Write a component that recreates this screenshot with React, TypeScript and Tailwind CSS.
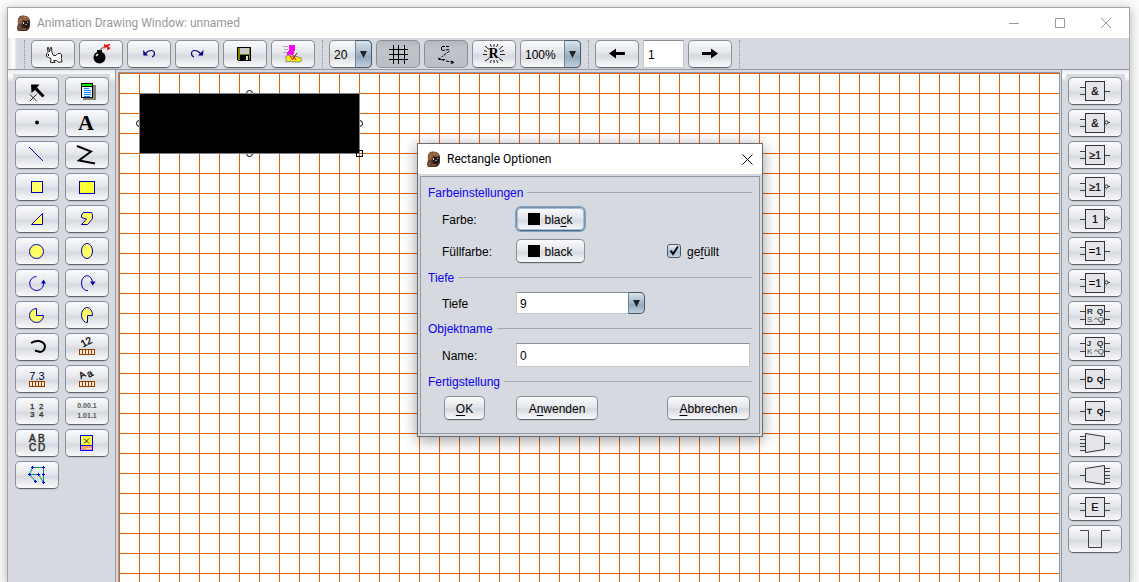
import React from "react";

const face =
  "rounded-[5px] border border-[#8b8e96] border-b-[#5f6269] bg-[linear-gradient(#fafbfc_0%,#e6e8ec_42%,#d6d9df_58%,#e4e6ea_72%,#f8f9fb_100%)] shadow-[0_1px_0_#c3c6cd]";
const arrowFace =
  "pointer-events-none absolute inset-y-0 right-0 flex items-center justify-center rounded-r-[5px] border border-[#46596c] border-l-[#6d8399] bg-[linear-gradient(#d8e3ec_0%,#a9bccd_45%,#93a9bd_60%,#bfd0de_100%)]";
const BLUE = "#0000bb";

function Icon({ children, crisp = false }: { children: React.ReactNode; crisp?: boolean }) {
  return (
    <svg
      width="30"
      height="24"
      viewBox="0 0 30 24"
      fill="none"
      shapeRendering={crisp ? "crispEdges" : "auto"}
      aria-hidden="true"
      className="block shrink-0 overflow-visible font-['Liberation_Sans',sans-serif]"
    >
      {children}
    </svg>
  );
}

function ToolButton({
  label,
  children,
  wide = false,
  pressed = false,
}: {
  label: string;
  children: React.ReactNode;
  wide?: boolean;
  pressed?: boolean;
}) {
  return (
    <button
      type="button"
      aria-label={label}
      className={`flex h-7 shrink-0 items-center justify-center ${wide ? "w-[54px]" : "w-11"} ${
        pressed
          ? "rounded-[5px] border border-[#8b8e96] bg-[linear-gradient(#b4b7bf,#c0c3ca_30%,#bcbfc6)] shadow-[0_1px_0_#e6e8ec]"
          : face
      }`}
    >
      {children}
    </button>
  );
}

function Poodle() {
  return (
    <svg width="14" height="16" viewBox="0 0 14 16" aria-hidden="true" className="block shrink-0">
      <path d="M3 1Q6 0 9 1Q12 2 13 5L13 12Q12 15 9 16L1 16L0 13L1 9L1 4Z" fill="#4a3024" />
      <path d="M2 3Q4 0 8 1Q12 1 12 5L10 6L6 5L5 8L3 10L1 9Q0 5 2 3Z" fill="#8f6040" />
      <path d="M1 10L4 9L5 15L1 16Z" fill="#6e4530" />
      <path d="M6 6L12 6L12 11L10 14L6 12Z" fill="#241a1a" />
      <path d="M3 4H5V5H3ZM7 2H9V3H7ZM2 12H3V13H2Z" fill="#ab7a52" />
      <rect x="6" y="7" width="1" height="2" fill="#d8d0cc" />
      <rect x="10" y="7" width="1" height="1" fill="#b9b0ad" />
      <path d="M8 9H10V10H8Z" fill="#8a8796" />
      <path d="M5 13H9V15H5Z" fill="#7d4a30" />
    </svg>
  );
}

function Ruler() {
  return (
    <path
      d="M7.5 14.5H22.5V19.5H7.5ZM10.5 14.5V19.5M13.5 14.5V19.5M16.5 14.5V19.5M19.5 14.5V19.5"
      stroke="#8f3d00"
      fill="#fbe9d8"
      shapeRendering="crispEdges"
    />
  );
}

const palette: { label: string; icon: React.ReactNode }[] = [
  {
    label: "Select",
    icon: (
      <Icon>
        <path d="M9 5.5H17.5L15 8.5L22.5 16.5L20.5 18.5L13 11L9.5 14Z" fill="#000" />
        <path d="M8 15.5L14.5 22M14.5 15.5L8 22" stroke="#222" />
      </Icon>
    ),
  },
  {
    label: "Properties",
    icon: (
      <Icon crisp>
        <rect x="11" y="6" width="13" height="15" fill="#808080" />
        <rect x="9.5" y="4.5" width="11" height="14" fill="#e4f2ff" stroke="#000" />
        <rect x="10" y="5" width="10" height="2" fill="#00f000" />
        <path d="M9.5 7.5H20.5" stroke="#000" />
        <path d="M12 9.5H17M12 11.5H19M12 13.5H19M12 15.5H19M12 17.5H18" stroke="#1683ff" />
      </Icon>
    ),
  },
  { label: "Point", icon: <Icon><circle cx="15" cy="11.5" r="2" fill="#000" /></Icon> },
  {
    label: "Text",
    icon: <span className="pr-[2px] font-['Liberation_Serif',serif] text-[22px] leading-[26px] font-bold">A</span>,
  },
  { label: "Line", icon: <Icon><path d="M7 4L21 18" stroke={BLUE} /></Icon> },
  { label: "Polyline", icon: <Icon><path d="M5 3L19 8.5L7 17.5L23 20.5" stroke="#000" strokeWidth="2" /></Icon> },
  { label: "Square", icon: <Icon crisp><rect x="9.5" y="6.5" width="11" height="11" fill="#ffff66" stroke={BLUE} /></Icon> },
  { label: "Rectangle", icon: <Icon crisp><rect x="7.5" y="6.5" width="15" height="12" fill="#ffff33" stroke={BLUE} /></Icon> },
  { label: "Triangle", icon: <Icon><path d="M20.5 6.5V17.5H9.5Z" fill="#ffff66" stroke={BLUE} /></Icon> },
  { label: "Polygon", icon: <Icon><path d="M11.5 5.5H19.5L20.5 7.5V11.5L15.5 17.5H9.5L14.5 12L9.5 10.5L9.5 8Z" fill="#ffff66" stroke={BLUE} /></Icon> },
  { label: "Circle", icon: <Icon><circle cx="14.5" cy="12.5" r="7" fill="#ffff66" stroke={BLUE} /></Icon> },
  { label: "Ellipse", icon: <Icon><ellipse cx="15" cy="12" rx="5.5" ry="7.5" fill="#ffff66" stroke={BLUE} /></Icon> },
  {
    label: "Open arc",
    icon: (
      <Icon>
        <path d="M14.5 5.5A7 7 0 1 0 21.5 11" stroke={BLUE} />
        <path d="M19 12.5L21.5 8.5L24 12.5Z" fill={BLUE} />
      </Icon>
    ),
  },
  {
    label: "Elliptic arc",
    icon: (
      <Icon>
        <path d="M16 19.5A5.5 7.5 0 1 1 20.5 12" stroke={BLUE} />
        <path d="M18 10.5H23.5L20.8 14.5Z" fill={BLUE} />
      </Icon>
    ),
  },
  { label: "Circle segment", icon: <Icon><path d="M14.5 12.5V5.5A7 7 0 1 0 21.5 12.5Z" fill="#ffff66" stroke={BLUE} /></Icon> },
  { label: "Ellipse segment", icon: <Icon><path d="M15.5 12.5H20.5A5.5 7.5 0 1 0 15.5 19.5Z" fill="#ffff66" stroke={BLUE} /></Icon> },
  { label: "Arc", icon: <Icon><path d="M9 8Q13 5.5 17 6Q23 7.5 23 11.5Q22.5 16.5 18 17L13 15.5" stroke="#000" strokeWidth="2" /></Icon> },
  {
    label: "Integer array",
    icon: (
      <Icon>
        <text x="11" y="12.5" fontSize="10" fill="#000" stroke="#000" strokeWidth="0.3" transform="rotate(-28 11 12.5)">12</text>
        <Ruler />
      </Icon>
    ),
  },
  {
    label: "Double array",
    icon: (
      <Icon>
        <text x="15" y="13" fontSize="11" textAnchor="middle" fill="#000044">7.3</text>
        <Ruler />
      </Icon>
    ),
  },
  {
    label: "String array",
    icon: (
      <Icon>
        <g fill="#000" stroke="#000" strokeWidth="0.3">
          <text x="9" y="12" fontSize="9" transform="rotate(-30 9 12)">A</text>
          <text x="17" y="11" fontSize="10" transform="rotate(-30 17 11)">a</text>
        </g>
        <Ruler />
      </Icon>
    ),
  },
  {
    label: "Integer matrix",
    icon: (
      <Icon>
        <g fontSize="8" fill="#333" stroke="#333" strokeWidth="0.3">
          <text x="8" y="10">1</text>
          <text x="17" y="10">2</text>
          <text x="8" y="18">3</text>
          <text x="17" y="18">4</text>
        </g>
      </Icon>
    ),
  },
  {
    label: "Double matrix",
    icon: (
      <Icon>
        <g fontSize="7" fontWeight="700" fill="#555" textAnchor="middle">
          <text x="15" y="9">0.00.1</text>
          <text x="15" y="19">1.01.1</text>
        </g>
      </Icon>
    ),
  },
  {
    label: "String matrix",
    icon: (
      <Icon>
        <g fontSize="10" fill="#333" stroke="#333" strokeWidth="0.5">
          <text x="7" y="11">A</text>
          <text x="16" y="11">B</text>
          <text x="7" y="20">C</text>
          <text x="16" y="20">D</text>
        </g>
      </Icon>
    ),
  },
  {
    label: "List element",
    icon: (
      <Icon crisp>
        <rect x="8.5" y="4.5" width="12" height="15" fill="#ff9977" stroke="#0000ff" />
        <rect x="8.5" y="4.5" width="12" height="10" fill="#ffff44" stroke="#0000ff" />
        <path d="M12 7.5L17 12.5M17 7.5L12 12.5" stroke="#222" shapeRendering="auto" />
        <path d="M14 17.5H20" stroke="#ffd0c0" />
      </Icon>
    ),
  },
  {
    label: "Graph",
    icon: (
      <Icon>
        <path d="M7.5 11.5L10.5 4.5H21.5V19.5L16.5 11.5H7.5L13.5 18.5" stroke="#00906c" />
        <path
          d="M9 4.5H12M10.5 3V6M20 4.5H23M21.5 3V6M6 11.5H9M7.5 10V13M15 11.5H18M16.5 10V13M20 11.5H23M21.5 10V13M12 18.5H15M13.5 17V20M20 19.5H23M21.5 18V21"
          stroke="#0000ff"
        />
      </Icon>
    ),
  },
];

function Gate({
  ins,
  outs,
  inverted = false,
  children,
}: {
  ins: number[];
  outs: number[];
  inverted?: boolean;
  children: React.ReactNode;
}) {
  return (
    <Icon>
      <rect x="5.5" y="2.5" width="19" height="19" fill="#e3e5e8" stroke="#333" />
      {ins.map((y) => (
        <path key={`i${y}`} d={`M0 ${y}H5`} stroke="#444" />
      ))}
      {outs.map((y) => (
        <path key={`o${y}`} d={`M${inverted ? 28 : 25} ${y}H30`} stroke="#444" />
      ))}
      {inverted && <circle cx="26.5" cy="11.5" r="1.6" fill="#fff" stroke="#222" />}
      <g fill="#000" stroke="#000" strokeWidth="0.2">{children}</g>
    </Icon>
  );
}

function Sign({ text, size }: { text: string; size: number }) {
  return (
    <text x="15" y="16" fontSize={size} textAnchor="middle">
      {text}
    </text>
  );
}

function FlipFlop({ top, bottom }: { top: string; bottom: string }) {
  return (
    <Gate ins={[8.5, 16.5]} outs={[8.5, 16.5]}>
      <g fontSize="8">
        <text x="7" y="11">{top}</text>
        <text x="17" y="11">Q</text>
        <text x="7" y="19" fill="#555" stroke="none">{bottom}</text>
        <text x="14" y="19" fill="#333" stroke="none">^Q</text>
      </g>
    </Gate>
  );
}

function Latch({ name }: { name: string }) {
  return (
    <Gate ins={[12.5]} outs={[12.5]}>
      <g fontSize="8" strokeWidth="0.4">
        <text x="7" y="15">{name}</text>
        <text x="17" y="15">Q</text>
      </g>
    </Gate>
  );
}

const gates: { label: string; icon: React.ReactNode }[] = [
  { label: "AND", icon: <Gate ins={[8.5, 15.5]} outs={[12.5]}><Sign text="&" size={11} /></Gate> },
  { label: "NAND", icon: <Gate ins={[8.5, 15.5]} outs={[11.5]} inverted><Sign text="&" size={11} /></Gate> },
  { label: "OR", icon: <Gate ins={[8.5, 15.5]} outs={[12.5]}><Sign text="≥1" size={11} /></Gate> },
  { label: "NOR", icon: <Gate ins={[8.5, 15.5]} outs={[11.5]} inverted><Sign text="≥1" size={11} /></Gate> },
  { label: "NOT", icon: <Gate ins={[12.5]} outs={[11.5]} inverted><Sign text="1" size={11} /></Gate> },
  { label: "XNOR", icon: <Gate ins={[8.5, 15.5]} outs={[12.5]}><Sign text="=1" size={11} /></Gate> },
  { label: "XOR", icon: <Gate ins={[8.5, 15.5]} outs={[11.5]} inverted><Sign text="=1" size={11} /></Gate> },
  { label: "RS flip-flop", icon: <FlipFlop top="R" bottom="S" /> },
  { label: "JK flip-flop", icon: <FlipFlop top="J" bottom="K" /> },
  { label: "D flip-flop", icon: <Latch name="D" /> },
  { label: "T flip-flop", icon: <Latch name="T" /> },
  {
    label: "Multiplexer",
    icon: (
      <Icon>
        <path d="M5.5 2.5L24.5 5.5V18.5L5.5 21.5Z" fill="#e3e5e8" stroke="#333" />
        <path d="M0 5.5H5M0 8.5H5M0 12.5H5M0 15.5H5M0 19.5H5M25 12.5H30" stroke="#444" />
      </Icon>
    ),
  },
  {
    label: "Demultiplexer",
    icon: (
      <Icon>
        <path d="M24.5 2.5L5.5 5.5V18.5L24.5 21.5Z" fill="#e3e5e8" stroke="#333" />
        <path d="M25 5.5H30M25 8.5H30M25 12.5H30M25 15.5H30M25 19.5H30M0 12.5H5" stroke="#444" />
      </Icon>
    ),
  },
  { label: "Element", icon: <Gate ins={[8.5, 15.5]} outs={[8.5, 15.5]}><Sign text="E" size={11} /></Gate> },
  { label: "Pulse", icon: <Icon><path d="M0 3.5H8.5V20.5H21.5V3.5H30" stroke="#444" /></Icon> },
];

function Separator() {
  return (
    <div className="flex h-7 w-[6px] shrink-0 justify-center">
      <div className="border-l border-dotted border-[#8b8e96]" />
    </div>
  );
}

function Triangle() {
  return (
    <svg width="7" height="7" viewBox="0 0 7 7" aria-hidden="true">
      <path d="M0 0H7L3.5 7Z" fill="#222" />
    </svg>
  );
}

function ToolSelect({ label, value, width }: { label: string; value: string; width: string }) {
  return (
    <div className={`relative h-7 shrink-0 ${width}`}>
      <select aria-label={label} defaultValue={value} className={`h-full w-full appearance-none pt-[2px] pl-1 text-[12px] outline-none ${face}`}>
        <option>{value}</option>
      </select>
      <span className={`${arrowFace} w-[17px]`}>
        <Triangle />
      </span>
    </div>
  );
}

function Arrow({ flip = false }: { flip?: boolean }) {
  return (
    <Icon>
      <path
        d={flip ? "M23 11.5L16 6.5V10H7V13H16V16.5Z" : "M7 11.5L14 6.5V10H23V13H14V16.5Z"}
        fill="#000"
      />
    </Icon>
  );
}

function Toolbar() {
  return (
    <div className="flex h-8 gap-1 overflow-hidden border-b border-[#9297a1] bg-[#d6d9df] pt-[2px]">
      <div className="-mt-[2px] w-[9px] shrink-0 bg-[linear-gradient(90deg,#e2e5ea,#ffffff_60%,#d6d9df)]" />
      <Separator />
      <ToolButton label="New">
        <Icon>
          <path
            d="M9.5 5.5H10.5L11.5 10L12.5 5.5H13.5L14 10.5L15.5 13.5H18L20 11.5H22.5L23.5 13V16.5L24 20H20L18.5 18.5H15.5L17 20.5H12.5L13 16.5L10.5 15.5L8.5 14.5V12L10 10.5Z"
            fill="#fff"
            stroke="#222"
          />
          <path d="M10.5 12V14" stroke="#000" />
        </Icon>
      </ToolButton>
      <ToolButton label="Delete">
        <Icon>
          <circle cx="13.5" cy="15.5" r="6" fill="#000" />
          <rect x="11" y="8" width="5" height="3" fill="#000" />
          <path d="M14 8L17 5.5H20" stroke="#888" strokeWidth="1.5" />
          <path d="M10 14L12 12" stroke="#fff" strokeWidth="1.5" />
          <path d="M18 2.5L24 6.5M24 2.5L18 4.5M19 4.5H22M22 4.5V8" stroke="#f00" strokeWidth="1.5" />
        </Icon>
      </ToolButton>
      <ToolButton label="Undo">
        <Icon>
          <path d="M9 8L9.5 13.5H14Z" fill="#000080" />
          <path d="M11.5 11.5Q14 8.5 17 8.5Q20.5 8.5 20.5 11.5Q20.5 14 18 15" stroke="#000080" strokeWidth="1.2" />
        </Icon>
      </ToolButton>
      <ToolButton label="Redo">
        <Icon>
          <path d="M21.5 8L21 13.5H16Z" fill="#000080" />
          <path d="M18.5 11.5Q16 8.5 13 8.5Q9.5 8.5 9.5 11.5Q9.5 14 12 15" stroke="#000080" strokeWidth="1.2" />
        </Icon>
      </ToolButton>
      <ToolButton label="Save">
        <Icon crisp>
          <path d="M7.5 5.5H20.5V18.5H8.5L7.5 17.5Z" fill="#808000" stroke="#000" />
          <rect x="10" y="6" width="9" height="6" fill="#c8c8c8" />
          <rect x="10" y="13" width="9" height="6" fill="#000" />
          <rect x="16" y="14" width="2" height="4" fill="#d8d8d8" />
        </Icon>
      </ToolButton>
      <ToolButton label="Run">
        <Icon crisp>
          <path d="M11 3H17V8L15 13H9V10L11 8Z" fill="#ff00ff" />
          <path d="M13 5h1v1h-1zM15 7h1v1h-1zM12 8h1v1h-1zM14 10h1v1h-1z" fill="#600060" />
          <path d="M8 14L12 13L15 15L17 14L23 16L24 18L22 20H15L13 19L8 20Z" fill="#ffee00" stroke="#888" shapeRendering="auto" />
          <path d="M12 14L15 18M15 13L18 18M19 11L15 17" stroke="#d00000" shapeRendering="auto" />
          <path d="M5 4.5H10M6 7.5H10M5 10.5H9" stroke="#aaa" />
        </Icon>
      </ToolButton>
      <Separator />
      <ToolSelect label="Grid size" value="20" width="w-[43px]" />
      <ToolButton label="Show grid" pressed>
        <Icon crisp>
          <path d="M10.5 3V22M15.5 3V22M21.5 3V22M6 7.5H25M6 12.5H25M6 17.5H25" stroke="#000" />
        </Icon>
      </ToolButton>
      <ToolButton label="Snap" pressed>
        <Icon>
          <path d="M11 4.5H19M10.5 5V8M11 8.5L18 7.5M18.5 9L10.5 15" stroke="#000" strokeDasharray="3 1" />
          <path d="M7 16L13 18.5M7.5 17.5L14 17.5M15 19L23 20.5" stroke="#000" strokeDasharray="3 1" />
          <path d="M20 19L23 20.5L20 21.5" stroke="#000" />
        </Icon>
      </ToolButton>
      <ToolButton label="Refresh">
        <Icon>
          <text x="14.5" y="16" fontSize="14" fontWeight="700" textAnchor="middle" fill="#000" fontFamily="Liberation Serif, serif">R</text>
          <path
            d="M15 2V5M11 2L12.5 5M19 2L17.5 5M6 4L10 7.5M24 4L20 7.5M5 8.5L8 9.5M25 8.5L21 9.5M4 12.5H8M21 12.5H26M6 19L10 16.5M24 19L20 16.5M11 21L12.5 18M19 21L17.5 18M15 18V21"
            stroke="#222"
          />
        </Icon>
      </ToolButton>
      <ToolSelect label="Zoom" value="100%" width="w-[61px]" />
      <Separator />
      <ToolButton label="Previous step">
        <Arrow />
      </ToolButton>
      <input
        aria-label="Step"
        defaultValue="1"
        className="h-7 w-[41px] shrink-0 border border-[#c3c6cb] border-t-[#8d8f94] bg-white px-1 pt-[2px] text-[12px] outline-none"
      />
      <ToolButton label="Next step">
        <Arrow flip />
      </ToolButton>
      <Separator />
    </div>
  );
}

const stripClass = "shrink-0 bg-[#d6d9df] bg-[linear-gradient(#e8eaee,#ffffff_50%,#e0e3e8)] bg-[length:100%_11px] bg-no-repeat";

function Section({ title }: { title: string }) {
  return (
    <div className="flex h-4 items-center gap-1">
      <h2 className="pt-[2px] text-[12px] leading-4 text-[#0c00f4]">{title}</h2>
      <div className="h-px flex-1 bg-[#a4a9b3]" />
    </div>
  );
}

function ColorButton({ id, children, focused = false }: { id: string; children: React.ReactNode; focused?: boolean }) {
  return (
    <button
      id={id}
      type="button"
      className={`flex h-6 w-[69px] items-center justify-center gap-1 ${face} ${focused ? "ring-1 ring-[#73a4d1] inset-ring inset-ring-[#9fc0de]" : ""}`}
    >
      <span className="size-3 bg-black" />
      <span className="pt-[2px]">{children}</span>
    </button>
  );
}

const labelClass = "w-[74px] pt-[2px]";

function OptionsDialog() {
  return (
    <div
      role="dialog"
      aria-label="Rectangle Optionen"
      className="absolute top-[135px] left-[409px] w-[346px] border border-[#6b6d70] bg-[#d6d9df] shadow-[0_3px_14px_rgba(0,0,0,0.4)]"
    >
      <div className="flex h-[30px] items-center bg-white pr-[9px] pl-[9px]">
        <Poodle />
        <h1 className="ml-[6px] flex-1 font-['Roboto',sans-serif] text-[12px] text-black">Rectangle Optionen</h1>
        <button type="button" aria-label="Close">
          <svg width="11" height="11" viewBox="0 0 11 11" aria-hidden="true">
            <path d="M0.5 0.5L10.5 10.5M10.5 0.5L0.5 10.5" stroke="#000" />
          </svg>
        </button>
      </div>
      <form
        className="m-[2px] border border-[#9297a1] px-[7px] pt-[7px] pb-[13px] text-[12px] leading-4"
        onSubmit={(e) => e.preventDefault()}
      >
        <Section title="Farbeinstellungen" />
        <div className="mt-[7px] mb-[6px] flex flex-col gap-2 pr-[2px] pl-[14px]">
          <div className="flex items-center">
            <label htmlFor="color" className={labelClass}>Farbe:</label>
            <ColorButton id="color" focused>
              bla<u className="underline-offset-2">c</u>k
            </ColorButton>
          </div>
          <div className="flex items-center">
            <label htmlFor="fill" className={labelClass}>Füllfarbe:</label>
            <ColorButton id="fill">black</ColorButton>
            <div className="ml-auto flex w-[83px] items-center gap-[6px]">
              <span className="relative size-[14px]">
                <input
                  id="filled"
                  type="checkbox"
                  defaultChecked
                  className="block size-[14px] appearance-none rounded-[3px] border border-[#46596c] bg-[linear-gradient(#eaf0f5,#a9bccd_60%,#c9d8e4)]"
                />
                <svg width="14" height="14" viewBox="0 0 14 14" aria-hidden="true" className="pointer-events-none absolute inset-0">
                  <path d="M3.5 6.5L6 10L11 2.5" stroke="#000" strokeWidth="2" fill="none" />
                </svg>
              </span>
              <label htmlFor="filled" className="pt-[2px]">
                ge<u className="underline-offset-2">f</u>üllt
              </label>
            </div>
          </div>
        </div>
        <Section title="Tiefe" />
        <div className="mt-[7px] mb-[6px] flex items-center pr-[2px] pl-[14px]">
          <label htmlFor="depth" className={labelClass}>Tiefe</label>
          <div className="relative h-[22px] w-[129px]">
            <select
              id="depth"
              defaultValue="9"
              className="h-full w-full appearance-none rounded-r-[5px] border border-[#c3c6cb] border-t-[#8d8f94] bg-white px-[3px] pt-[2px] outline-none"
            >
              <option>9</option>
            </select>
            <span className={`${arrowFace} w-[17px]`}>
              <Triangle />
            </span>
          </div>
        </div>
        <Section title="Objektname" />
        <div className="mt-[7px] mb-[6px] flex items-center pr-[2px] pl-[14px]">
          <label htmlFor="name" className={labelClass}>Name:</label>
          <input
            id="name"
            defaultValue="0"
            className="h-6 min-w-0 flex-1 border border-[#c3c6cb] border-t-[#8d8f94] bg-white px-[3px] pt-[2px] outline-none"
          />
        </div>
        <Section title="Fertigstellung" />
        <div className="mt-[7px] flex pr-[2px] pl-4">
          <div className="w-[72px]">
            <button type="button" className={`h-6 w-[41px] pt-[2px] ${face}`}>
              <u className="underline-offset-2">O</u>K
            </button>
          </div>
          <button type="button" className={`h-6 w-[82px] pt-[2px] ${face}`}>
            A<u className="underline-offset-2">n</u>wenden
          </button>
          <button type="button" className={`ml-auto h-6 w-[83px] pt-[2px] ${face}`}>
            <u className="underline-offset-2">A</u>bbrechen
          </button>
        </div>
      </form>
    </div>
  );
}

function Canvas() {
  return (
    <main className="relative mt-[2px] mr-px ml-[2px] min-w-0 flex-1 overflow-hidden border border-b-0 border-[#9297a1] bg-white bg-[linear-gradient(#e06000_1px,transparent_1px),linear-gradient(90deg,#e06000_1px,transparent_1px)] bg-[length:20px_20px]">
      <svg width="240" height="80" viewBox="0 0 240 80" className="absolute top-[10px] left-[10px]" role="img" aria-label="Rectangle" shapeRendering="crispEdges">
        <g fill="#fff" stroke="#000" shapeRendering="auto">
          <circle cx="120.5" cy="10.5" r="3" />
          <circle cx="120.5" cy="70.5" r="3" />
          <circle cx="10.5" cy="40.5" r="3" />
          <circle cx="230.5" cy="40.5" r="3" />
        </g>
        <rect x="10.5" y="10.5" width="220" height="60" fill="#000" stroke="#808080" />
        <rect x="227.5" y="67.5" width="6" height="6" fill="none" stroke="#000" />
      </svg>
    </main>
  );
}

export default function App() {
  return (
    <div className="flex min-h-screen bg-[#fbfbfb] pt-[7px] pr-[9px] pl-[7px] font-['Liberation_Sans',Arial,sans-serif] text-black">
      <div className="relative flex min-w-0 flex-1 flex-col border border-b-0 border-[#a3a3a3] bg-[#d6d9df] shadow-[0_2px_10px_rgba(0,0,0,0.3)]">
        <header className="flex h-[30px] items-center bg-white pr-[18px] pl-[9px] text-[#999]">
          <Poodle />
          <span className="ml-[6px] flex-1 font-['Roboto',sans-serif] text-[12px]">Animation Drawing Window: unnamed</span>
          <div className="flex items-center gap-9">
            <button type="button" aria-label="Minimize">
              <svg width="10" height="10" viewBox="0 0 10 10" aria-hidden="true"><path d="M0 5.5H10" stroke="#999" /></svg>
            </button>
            <button type="button" aria-label="Maximize">
              <svg width="10" height="10" viewBox="0 0 10 10" aria-hidden="true"><path d="M0.5 0.5H9.5V9.5H0.5Z" fill="none" stroke="#999" /></svg>
            </button>
            <button type="button" aria-label="Close window">
              <svg width="10" height="10" viewBox="0 0 10 10" aria-hidden="true"><path d="M0 0L10 10M10 0L0 10" stroke="#999" /></svg>
            </button>
          </div>
        </header>
        <Toolbar />
        <div className="flex flex-1">
          <aside className={`border-r border-[#9297a1] px-[5px] pt-1 ${stripClass}`}>
            <div className="grid grid-cols-2 gap-x-[6px] gap-y-1 bg-[#d6d9df] pt-[3px] pr-px pl-[2px]">
              {palette.map((p) => (
                <ToolButton key={p.label} label={p.label}>
                  {p.icon}
                </ToolButton>
              ))}
            </div>
          </aside>
          <Canvas />
          <aside className={`border-l border-[#9297a1] px-1 pt-1 ${stripClass}`}>
            <div className="flex flex-col gap-1 bg-[#d6d9df] pt-[3px] pr-[3px] pl-[2px]">
              {gates.map((g) => (
                <ToolButton key={g.label} label={g.label} wide>
                  {g.icon}
                </ToolButton>
              ))}
            </div>
          </aside>
        </div>
        <OptionsDialog />
      </div>
    </div>
  );
}
